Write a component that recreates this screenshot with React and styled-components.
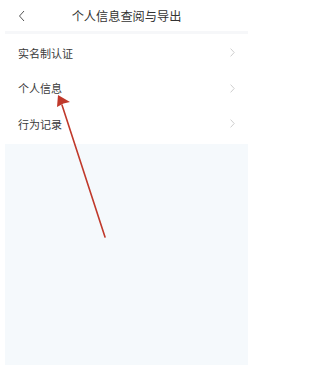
import styled, { createGlobalStyle } from "styled-components";

const GlobalStyle = createGlobalStyle`
  html, body {
    margin: 0;
    padding: 0;
    background: #ffffff;
  }
  body {
    font-family: "Noto Sans CJK SC", "Noto Sans", sans-serif;
  }
`;

const Page = styled.div`
  position: relative;
  width: 253px;
  height: 365px;
  display: flex;
  flex-direction: column;
  overflow: hidden;
`;

const Header = styled.div`
  height: 31px;
  display: flex;
  align-items: center;
  justify-content: center;
  position: relative;
  margin: 0 5px;
  border-bottom: 3px solid #f6f7f9;
`;

const Back = styled.svg`
  position: absolute;
  left: 13px;
  top: 10px;
`;

const Title = styled.div`
  font-size: 12.2px;
  color: #333333;
  letter-spacing: 0;
  margin-top: 1px;
`;

const List = styled.div`
  display: flex;
  flex-direction: column;
  padding-top: 1px;
`;

const Row = styled.div`
  height: 35.5px;
  display: flex;
  align-items: center;
  justify-content: space-between;
  padding: 0 18px 0 18px;
`;

const Label = styled.span`
  font-size: 11px;
  color: #3a3a3a;
`;

const Chevron = styled.svg`
  display: block;
`;

const Panel = styled.div`
  flex: 1;
  margin: 2px 5px 0;
  background: #f5f9fc;
`;

const Arrow = styled.svg`
  position: absolute;
  left: 0;
  top: 0;
  pointer-events: none;
`;

const items = ["实名制认证", "个人信息", "行为记录"];

const App = () => {
  return (
    <Page>
      <GlobalStyle />
      <Header>
        <Back width="8" height="12" viewBox="0 0 8 12">
          <path d="M6 1 L1.5 6 L6 11" fill="none" stroke="#555" strokeWidth="1" />
        </Back>
        <Title>个人信息查阅与导出</Title>
      </Header>
      <List>
        {items.map((t) => (
          <Row key={t}>
            <Label>{t}</Label>
            <Chevron width="5" height="9" viewBox="0 0 5 9">
              <path d="M0.6 0.6 L4.2 4.5 L0.6 8.4" fill="none" stroke="#c8c8c8" strokeWidth="0.9" />
            </Chevron>
          </Row>
        ))}
      </List>
      <Panel />
      <Arrow width="253" height="365" viewBox="0 0 253 365">
        <line x1="105" y1="237" x2="62" y2="105" stroke="#c0392b" strokeWidth="1.6" strokeLinecap="round" />
        <path d="M58 95 L70 102 L63.5 103.5 L57 107 Z" fill="#c0392b" />
      </Arrow>
    </Page>
  );
};

export default App;
